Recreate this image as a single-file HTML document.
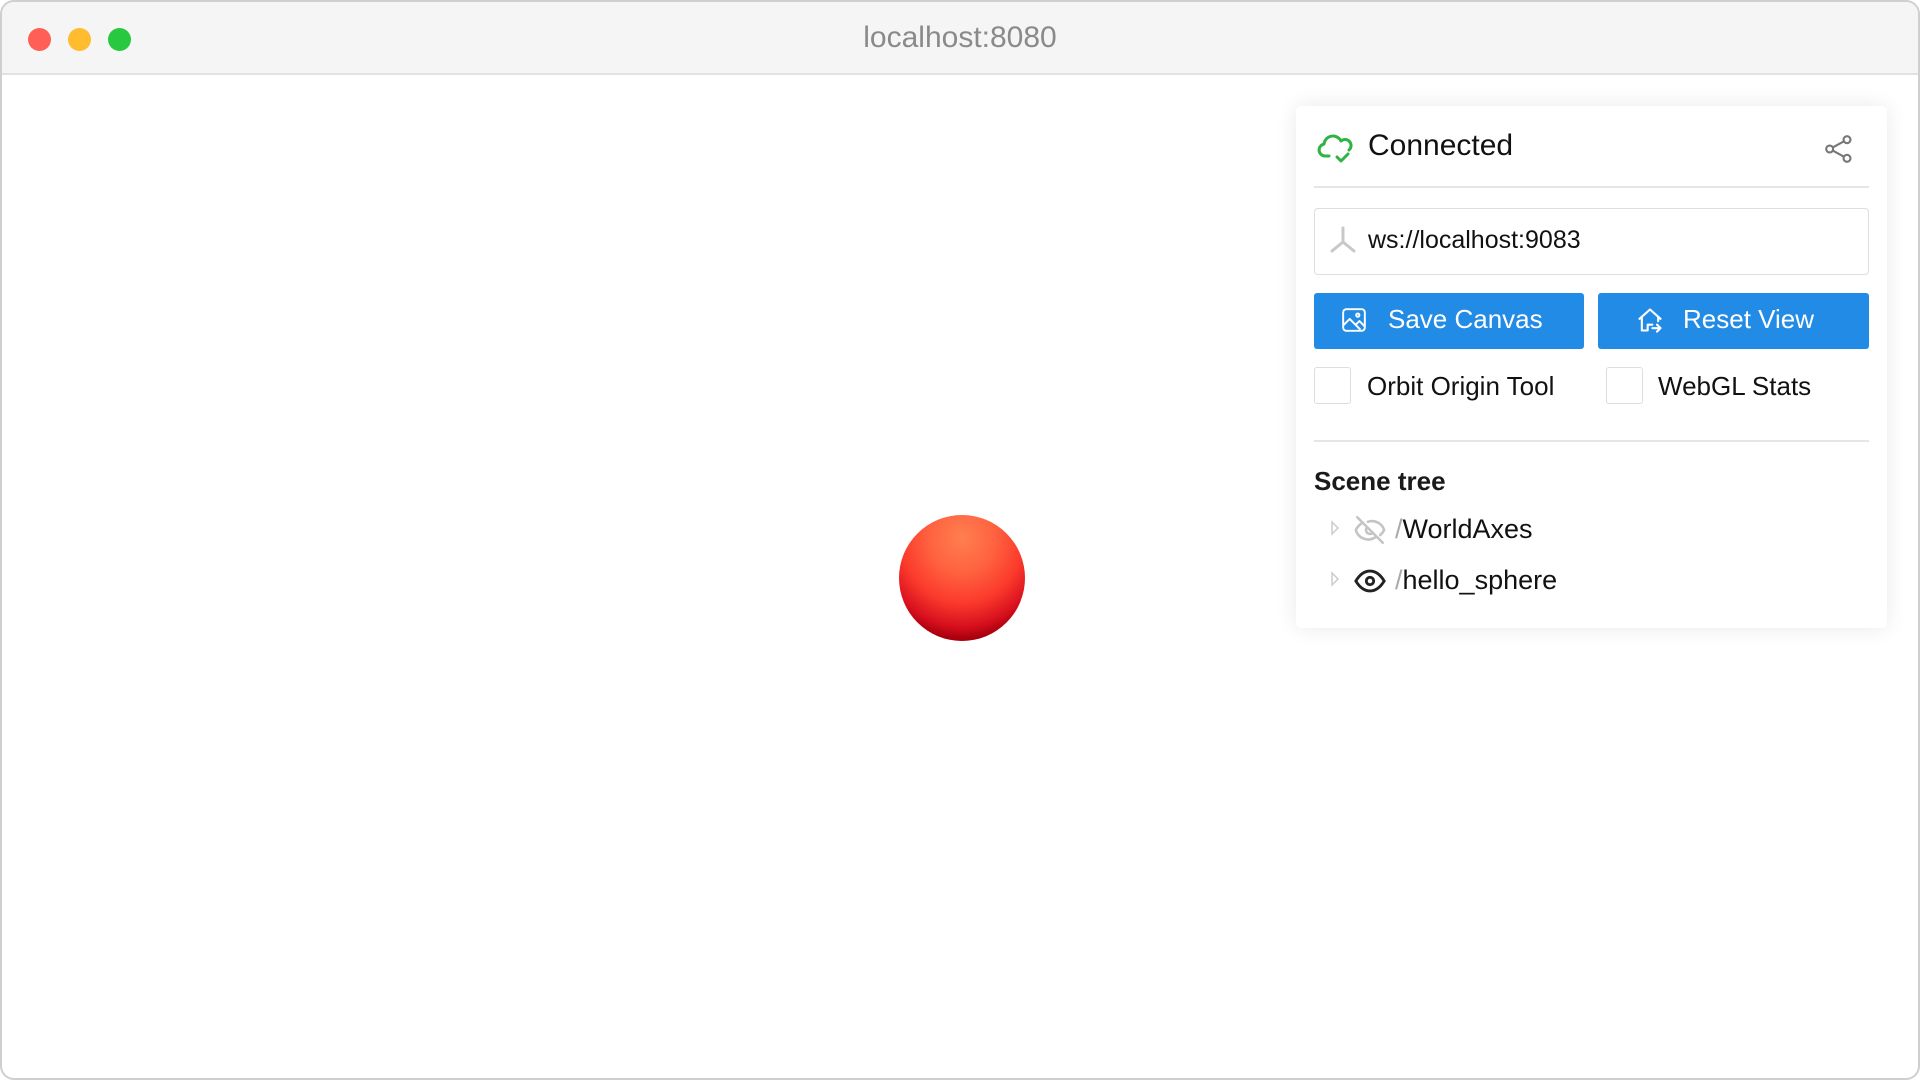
<!DOCTYPE html>
<html><head><meta charset="utf-8"><style>
*{box-sizing:border-box;margin:0;padding:0}
html,body{width:1920px;height:1080px;overflow:hidden;background:#fff;font-family:"Liberation Sans",sans-serif}
.win{position:absolute;left:0;top:0;width:1920px;height:1080px;border:2px solid #cfcfcf;border-radius:14px;overflow:hidden;background:#fff}
.bar{position:absolute;left:0;top:0;right:0;height:73px;background:#f5f5f5;border-bottom:2px solid #e2e2e2}
.dot{position:absolute;top:26px;width:23px;height:23px;border-radius:50%}
.title{position:absolute;left:0;right:0;top:19px;text-align:center;font-size:30px;color:#8a8a8a}
.sphere{position:absolute;left:897px;top:513px;width:126px;height:126px;border-radius:50%;
background:radial-gradient(ellipse 75% 80% at 50% 18%,#ff7f50 0%,#ff6240 35%,#fb3a2c 65%,#d8101e 88%,#a8000e 100%)}
.panel{position:absolute;left:1294px;top:104px;width:591px;height:522px;background:#fff;border-radius:5px;box-shadow:0 0 22px rgba(0,0,0,0.09)}
.abs{position:absolute}
.t{position:absolute;color:#111;white-space:nowrap}
.hr{position:absolute;left:18px;width:555px;height:2px;background:#e6e6e6}
.btn{position:absolute;top:187px;height:56px;background:#228be6;border-radius:3px;color:#fff;font-size:26px}
.cb{position:absolute;top:261px;width:37px;height:37px;border:1.5px solid #ddd;border-radius:3px;background:#fff}
</style></head><body>
<div class="win">
 <div class="bar">
  <div class="dot" style="left:26px;background:#ff5f57"></div>
  <div class="dot" style="left:66px;background:#febc2e"></div>
  <div class="dot" style="left:106px;background:#28c840"></div>
  <div class="title">localhost:8080</div>
 </div>
 <div class="sphere"></div>
 <div class="panel">
  <svg class="abs" style="left:21px;top:26px" width="36" height="32" viewBox="0 0 36 32" fill="none" stroke="#2fb344" stroke-width="3" stroke-linecap="round" stroke-linejoin="round">
   <path d="M12 24H8a6 6 0 0 1-1-11.9A9 9 0 0 1 24 9a6 6 0 0 1 8 9"/><path d="M20 25l4 4 7-7"/></svg>
  <div class="t" style="left:72px;top:23px;font-size:30px">Connected</div>
  <svg class="abs" style="left:527px;top:27px" width="32" height="32" viewBox="0 0 24 24" fill="none" stroke="#777" stroke-width="1.6">
   <circle cx="5" cy="12" r="2.6"/><circle cx="18" cy="5" r="2.6"/><circle cx="18" cy="19" r="2.6"/><path d="M7.3 10.8l8.4-4.6M7.3 13.2l8.4 4.6"/></svg>
  <div class="hr" style="top:80px"></div>
  <div class="abs" style="left:18px;top:102px;width:555px;height:67px;border:1.5px solid #dedede;border-radius:4px"></div>
  <svg class="abs" style="left:32px;top:120px" width="30" height="30" viewBox="0 0 30 30" fill="none" stroke="#c8c8c8" stroke-width="3" stroke-linecap="round">
   <path d="M15 2v14M15 16L4 25M15 16l11 9"/></svg>
  <div class="t" style="left:72px;top:120px;font-size:25px">ws://localhost:9083</div>
  <div class="btn" style="left:18px;width:270px">
   <svg class="abs" style="left:27px;top:14px" width="26" height="26" viewBox="0 0 24 24" fill="none" stroke="#fff" stroke-width="1.8" stroke-linejoin="round"><rect x="2" y="2" width="20" height="20" rx="3"/><circle cx="15.5" cy="7.5" r="1.5"/><path d="M2 17l6-6 10 10M14 16l3-3 5 5"/></svg>
   <div class="abs" style="left:74px;top:11px">Save Canvas</div></div>
  <div class="btn" style="left:302px;width:271px">
   <svg class="abs" style="left:38px;top:13px" width="28" height="28" viewBox="0 0 24 24" fill="none" stroke="#fff" stroke-width="1.8" stroke-linecap="round" stroke-linejoin="round"><path d="M3 11l9-8 9 8M5 9.5V21h4M19 9.5V13"/><path d="M10 21v-5h4M14 19h7M18 16l3 3-3 3"/></svg>
   <div class="abs" style="left:85px;top:11px">Reset View</div></div>
  <div class="cb" style="left:18px"></div>
  <div class="t" style="left:71px;top:265px;font-size:26px">Orbit Origin Tool</div>
  <div class="cb" style="left:310px"></div>
  <div class="t" style="left:362px;top:265px;font-size:26px">WebGL Stats</div>
  <div class="hr" style="top:334px"></div>
  <div class="t" style="left:18px;top:360px;font-size:26px;font-weight:bold;color:#1a1a1a">Scene tree</div>
  <svg class="abs" style="left:34px;top:414px" width="10" height="16"><path d="M2 2l6 6-6 6z" fill="none" stroke="#ccc" stroke-width="1.5"/></svg>
  <svg class="abs" style="left:57px;top:407px" width="34" height="34" viewBox="0 0 24 24" fill="none" stroke="#c4c4c4" stroke-width="1.8" stroke-linecap="round"><path d="M3 3l18 18"/><path d="M10.5 6.2A9 9 0 0 1 22 12a12 12 0 0 1-2.8 3.6M15.5 17.3A9 9 0 0 1 2 12a12 12 0 0 1 4-4.6"/><path d="M10 10a2.8 2.8 0 0 0 4 4"/></svg>
  <div class="t" style="left:99px;top:408px;font-size:27px"><span style="color:#aaa">/</span>WorldAxes</div>
  <svg class="abs" style="left:34px;top:465px" width="10" height="16"><path d="M2 2l6 6-6 6z" fill="none" stroke="#ccc" stroke-width="1.5"/></svg>
  <svg class="abs" style="left:57px;top:458px" width="34" height="34" viewBox="0 0 24 24" fill="none" stroke="#222" stroke-width="2"><path d="M2 12c3-5 6.5-7 10-7s7 2 10 7c-3 5-6.5 7-10 7S5 17 2 12z"/><circle cx="12" cy="12" r="2.6"/></svg>
  <div class="t" style="left:99px;top:459px;font-size:27px"><span style="color:#aaa">/</span>hello_sphere</div>
 </div>
</div>
</body></html>
